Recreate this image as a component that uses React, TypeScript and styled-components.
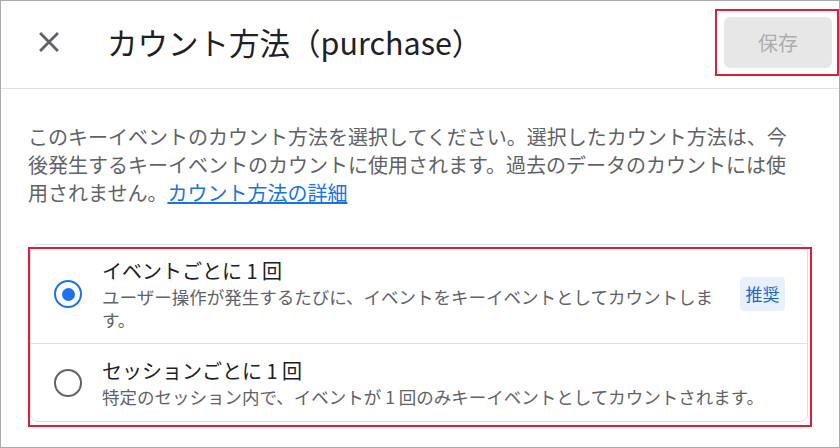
import React, { FC, useState } from "react";
import styled, { createGlobalStyle } from "styled-components";

const colors = {
  text: "#202124",
  textSecondary: "#5f6368",
  divider: "#e0e0e0",
  blue: "#1a73e8",
  annotation: "#dc1f3a"
};

const GlobalStyle = createGlobalStyle`
  html, body {
    margin: 0;
    padding: 0;
    background: #ffffff;
  }
  body {
    font-family: "Noto Sans CJK JP", "Noto Sans", sans-serif;
  }
`;

const Frame = styled.div`
  box-sizing: border-box;
  width: 840px;
  height: 448px;
  border: 1px solid #ababab;
  background: #ffffff;
  overflow: hidden;
  display: flex;
  flex-direction: column;
`;

const Header = styled.header`
  box-sizing: border-box;
  height: 88px;
  flex-shrink: 0;
  display: flex;
  align-items: center;
  padding: 0 7px 5px 31px;
  border-bottom: 1px solid ${colors.divider};
`;

const CloseButton = styled.button`
  width: 34px;
  height: 34px;
  padding: 0;
  border: none;
  background: transparent;
  color: ${colors.textSecondary};
  display: flex;
  align-items: center;
  justify-content: center;
  cursor: pointer;
`;

const Title = styled.h1`
  flex: 1;
  margin: 0 0 0 41px;
  font-size: 30.5px;
  font-weight: 400;
  line-height: 38px;
  color: ${colors.text};
`;

const Annotated = styled.div`
  position: relative;
`;

const AnnotationBox = styled.div<{ $inset: string }>`
  position: absolute;
  inset: ${(p) => p.$inset};
  border: 2px solid ${colors.annotation};
  pointer-events: none;
`;

const SaveButton = styled.button`
  width: 108px;
  height: 51px;
  border: none;
  border-radius: 6px;
  background: #e7e7e7;
  color: #adadad;
  font-family: inherit;
  font-size: 20px;
  cursor: default;
`;

const Body = styled.main`
  padding: 34px 31px 0 27px;
`;

const Intro = styled.p`
  margin: 0 10px 37px 0;
  font-size: 20px;
  line-height: 28px;
  color: ${colors.textSecondary};
`;

const Link = styled.a`
  color: ${colors.blue};
  text-decoration: underline;
  cursor: pointer;
`;

const Card = styled.div`
  margin-left: 2px;
  border: 1px solid #dadce0;
  border-radius: 8px;
`;

const OptionRow = styled.label`
  box-sizing: border-box;
  min-height: 78px;
  display: flex;
  align-items: center;
  padding: 12px 22px 12px 23px;
  cursor: pointer;

  & + & {
    border-top: 1px solid ${colors.divider};
  }
`;

const Radio = styled.span<{ $checked: boolean }>`
  box-sizing: border-box;
  flex-shrink: 0;
  width: 28px;
  height: 28px;
  border-radius: 50%;
  border: 2.8px solid ${(p) => (p.$checked ? colors.blue : colors.textSecondary)};
  display: flex;
  align-items: center;
  justify-content: center;

  &::after {
    content: "";
    width: 13px;
    height: 13px;
    border-radius: 50%;
    background: ${colors.blue};
    display: ${(p) => (p.$checked ? "block" : "none")};
  }
`;

const OptionText = styled.div`
  flex: 1;
  margin-left: 20px;
`;

const OptionTitle = styled.div`
  font-size: 20px;
  line-height: 28px;
  color: ${colors.text};
`;

const OptionDescription = styled.div`
  font-size: 17.5px;
  line-height: 23px;
  color: ${colors.textSecondary};
`;

const Badge = styled.span`
  flex-shrink: 0;
  margin-left: 22px;
  padding: 0 5.5px;
  height: 34px;
  line-height: 34px;
  border-radius: 4px;
  background: #e8f0fe;
  color: #1967d2;
  font-size: 17px;
`;

const CloseIcon: FC = () => (
  <svg width="34" height="34" viewBox="0 0 24 24" fill="currentColor">
    <path d="M19 6.41 17.59 5 12 10.59 6.41 5 5 6.41 10.59 12 5 17.59 6.41 19 12 13.41 17.59 19 19 17.59 13.41 12z" />
  </svg>
);

const options = [
  {
    id: "event",
    title: "イベントごとに 1 回",
    description:
      "ユーザー操作が発生するたびに、イベントをキーイベントとしてカウントします。",
    recommended: true
  },
  {
    id: "session",
    title: "セッションごとに 1 回",
    description:
      "特定のセッション内で、イベントが 1 回のみキーイベントとしてカウントされます。",
    recommended: false
  }
];

const App: FC = () => {
  const [selected, setSelected] = useState("event");

  return (
    <Frame>
      <GlobalStyle />
      <Header>
        <CloseButton aria-label="閉じる">
          <CloseIcon />
        </CloseButton>
        <Title>カウント方法（purchase）</Title>
        <Annotated>
          <SaveButton disabled>保存</SaveButton>
          <AnnotationBox $inset="-8px -7px -8px -9px" />
        </Annotated>
      </Header>
      <Body>
        <Intro>
          このキーイベントのカウント方法を選択してください。選択したカウント方法は、今後発生するキーイベントのカウントに使用されます。過去のデータのカウントには使用されません。
          <Link>カウント方法の詳細</Link>
        </Intro>
        <Annotated>
          <Card>
            {options.map((option) => (
              <OptionRow
                key={option.id}
                onClick={() => setSelected(option.id)}
              >
                <Radio $checked={selected === option.id} />
                <OptionText>
                  <OptionTitle>{option.title}</OptionTitle>
                  <OptionDescription>{option.description}</OptionDescription>
                </OptionText>
                {option.recommended && <Badge>推奨</Badge>}
              </OptionRow>
            ))}
          </Card>
          <AnnotationBox $inset="3px -4px -5px 0" />
        </Annotated>
      </Body>
    </Frame>
  );
};

export default App;
